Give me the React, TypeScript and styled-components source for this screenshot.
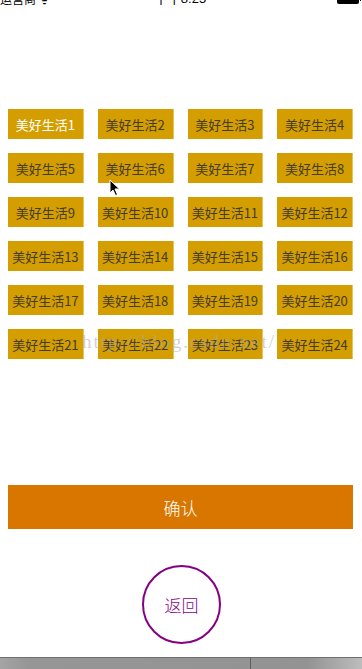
import React, { useState } from 'react';
import styled, { createGlobalStyle } from 'styled-components';

const GlobalStyle = createGlobalStyle`
  html, body {
    margin: 0;
    padding: 0;
    background: #fff;
  }
  body {
    font-family: 'Noto Sans CJK SC', 'Noto Sans', sans-serif;
  }
`;

const Page = styled.div`
  position: relative;
  width: 362px;
  height: 669px;
  display: flex;
  flex-direction: column;
  overflow: hidden;
  background: #fff;
`;

const StatusBar = styled.div`
  height: 6px;
  overflow: hidden;
  flex-shrink: 0;
`;

const StatusRow = styled.div`
  display: flex;
  align-items: center;
  justify-content: space-between;
  height: 14px;
  margin-top: -8px;
  padding: 0 1px 0 0;
  font-size: 12px;
  line-height: 14px;
  color: #000;
`;

const Carrier = styled.span`
  width: 120px;
`;

const Clock = styled.span`
  font-family: 'Liberation Sans', 'Noto Sans CJK SC', sans-serif;
  font-size: 13px;
`;

const Battery = styled.span`
  width: 120px;
  display: flex;
  justify-content: flex-end;
  align-items: center;
  gap: 1px;
  &::before {
    content: '';
    width: 22px;
    height: 10px;
    background: #000;
    border-radius: 2px;
  }
  &::after {
    content: '';
    width: 1px;
    height: 4px;
    background: #000;
  }
`;

const Grid = styled.div`
  display: grid;
  grid-template-columns: repeat(4, 1fr);
  column-gap: 14px;
  row-gap: 14px;
  padding: 103px 9px 0 8px;
`;

const Cell = styled.button<{ $active: boolean }>`
  height: 30px;
  border: none;
  border-right: 1px solid #e6c45a;
  margin: 0;
  padding: 0;
  background: #d49e00;
  color: ${(p) => (p.$active ? '#fff' : '#453c28')};
  font-family: 'Noto Sans CJK SC', sans-serif;
  font-size: 13px;
  white-space: nowrap;
  cursor: pointer;
`;

const Confirm = styled.button`
  margin: 126px 9px 0 8px;
  height: 44px;
  border: none;
  background: #d87600;
  color: #fff;
  font-family: 'Noto Sans CJK SC', sans-serif;
  font-weight: 300;
  font-size: 17px;
  cursor: pointer;
`;

const BackRow = styled.div`
  display: flex;
  justify-content: center;
  margin-top: 36px;
  padding-left: 1px;
`;

const Back = styled.button`
  width: 79px;
  height: 79px;
  border-radius: 50%;
  border: 2px solid #850085;
  background: #fff;
  color: #850085;
  font-family: 'Noto Sans CJK SC', sans-serif;
  font-weight: 300;
  font-size: 17px;
  padding: 0;
  cursor: pointer;
`;

const Spacer = styled.div`
  flex: 1;
`;

const Toolbar = styled.div`
  height: 11px;
  flex-shrink: 0;
  display: grid;
  grid-template-columns: 251px 1fr;
  border-top: 1px solid #6e6e6e;
  background: linear-gradient(90deg, #a4a4a4 0%, #969696 8%, #939393 85%, #bdbdbd 100%);
`;

const ToolbarPart = styled.div`
  border-right: 1px solid #5e5e5e;
`;

const Watermark = styled.div`
  position: absolute;
  left: 82px;
  top: 331px;
  font-family: 'Liberation Serif', serif;
  font-size: 19px;
  letter-spacing: 2px;
  color: rgba(170, 170, 170, 0.55);
  pointer-events: none;
  white-space: nowrap;
`;

const Cursor = styled.svg`
  position: absolute;
  left: 109px;
  top: 179px;
  pointer-events: none;
`;

const labels = Array.from({ length: 24 }, (_, i) => `美好生活${i + 1}`);

export default function App() {
  const [active, setActive] = useState(0);

  return (
    <Page>
      <GlobalStyle />
      <StatusBar>
        <StatusRow>
          <Carrier>运营商 ᯤ</Carrier>
          <Clock>下午8:25</Clock>
          <Battery />
        </StatusRow>
      </StatusBar>
      <Grid>
        {labels.map((label, i) => (
          <Cell key={label} $active={i === active} onClick={() => setActive(i)}>
            {label}
          </Cell>
        ))}
      </Grid>
      <Confirm>确认</Confirm>
      <BackRow>
        <Back>返回</Back>
      </BackRow>
      <Spacer />
      <Toolbar>
        <ToolbarPart />
        <div />
      </Toolbar>
      <Watermark>http://blog.csdn.net/</Watermark>
      <Cursor width="12" height="18" viewBox="0 0 12 18">
        <path d="M1 1 L1 14 L4 11 L6.5 16.5 L8.5 15.5 L6 10 L10.5 10 Z" fill="#000" stroke="#fff" strokeWidth="1" />
      </Cursor>
    </Page>
  );
}
